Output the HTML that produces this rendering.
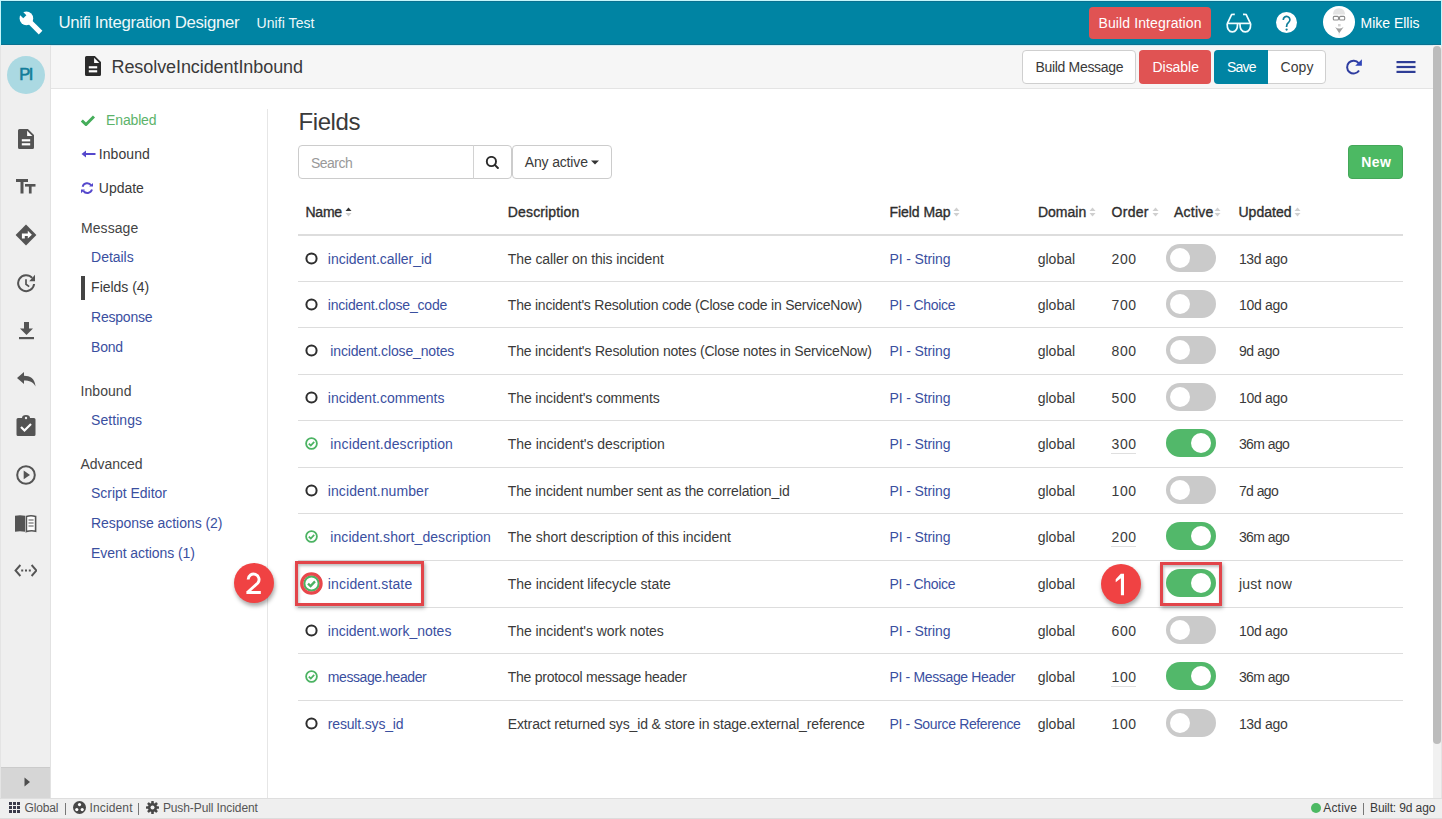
<!DOCTYPE html>
<html><head><meta charset="utf-8"><title>Unifi Integration Designer</title>
<style>
html,body{margin:0;padding:0;width:1442px;height:819px;overflow:hidden;background:#fff;}
body{position:relative;font-family:'Liberation Sans', sans-serif;}
svg{display:block;}
</style></head><body>
<div style="position:absolute;left:0px;top:0px;width:1442px;height:819px;background:#e4e4e4"></div>
<div style="position:absolute;left:0px;top:0px;width:1442px;height:46px;background:#c4f6fb"></div>
<div style="position:absolute;left:1px;top:1px;width:1440px;height:44px;background:#0084a3"></div>
<div style="position:absolute;left:1px;top:44px;width:1440px;height:1px;background:#0a7190"></div>
<div style="position:absolute;left:1px;top:1px;width:1440px;height:1px;background:#0a7190"></div>
<div style="position:absolute;left:51px;top:45px;width:1382px;height:43px;background:#f6f6f6;border-bottom:1px solid #e4e4e4"></div>
<div style="position:absolute;left:1px;top:45px;width:1440px;height:1px;background:#d3eef4"></div>
<div style="position:absolute;left:51px;top:89px;width:1382px;height:709px;background:#fff"></div>
<div style="position:absolute;left:1px;top:45px;width:49px;height:722px;background:#efefef"></div>
<div style="position:absolute;left:50px;top:45px;width:1px;height:753px;background:#e2e2e2"></div>
<div style="position:absolute;left:1px;top:767px;width:49px;height:31px;background:#d6d6d6;border-top:1px solid #cbcbcb;box-sizing:border-box"></div>
<div style="position:absolute;left:1433px;top:45px;width:8px;height:753px;background:#f1f1f1"></div>
<div style="position:absolute;left:1433px;top:46px;width:8px;height:698px;background:#bcbcbc;border-radius:4px"></div>
<div style="position:absolute;left:0px;top:798px;width:1442px;height:21px;background:#efefef;border-top:1px solid #dedede"></div>
<div style="position:absolute;left:0px;top:818px;width:1442px;height:1px;background:#dcdcdc"></div>
<svg style="position:absolute;left:19px;top:11px;" width="25" height="25" viewBox="0 0 25 25"><defs><mask id="wm"><rect x="-5" y="-5" width="35" height="35" fill="#fff"/><path d="M-0.44 -3.56 L7.36 4.24 L4.24 7.36 L-3.56 -0.44 Z" fill="#000"/></mask></defs><g mask="url(#wm)" fill="#fff"><circle cx="7.4" cy="7.4" r="6.8"/><path d="M6.2 9.8 L9.8 6.2 L23.4 19.8 L19.8 23.4 Z"/></g></svg>
<div style="position:absolute;left:58.50px;top:15.00px;font-size:16.8px;line-height:16.8px;font-weight:400;color:#eef8fa;letter-spacing:-0.334px;white-space:pre;">Unifi Integration Designer</div>
<div style="position:absolute;left:256.50px;top:16.00px;font-size:14px;line-height:14px;font-weight:400;color:#eef8fa;letter-spacing:0.075px;white-space:pre;">Unifi Test</div>
<div style="position:absolute;left:1089px;top:7px;width:122px;height:32px;background:#e05353;border-radius:4px"></div>
<div style="position:absolute;left:1098.50px;top:16.00px;font-size:14px;line-height:14px;font-weight:400;color:#fff;letter-spacing:0.113px;white-space:pre;">Build Integration</div>
<svg style="position:absolute;left:1225px;top:13px;" width="27" height="21" viewBox="0 0 27 21"><g fill="none" stroke="#f2fdff" stroke-width="1.7" stroke-linejoin="round"><path d="M2 10.4 H25.8"/><path d="M2.1 10.4 C2.1 15.9 4.3 18.8 7.3 18.8 C10.3 18.8 12.6 15.9 12.6 10.4"/><path d="M14.9 10.4 C14.9 15.9 17.2 18.8 20.3 18.8 C23.4 18.8 25.7 15.9 25.7 10.4"/><path d="M2.3 10.6 L6.6 1.6 Q7.3 1.2 9.8 1.3"/><path d="M25.5 10.6 L21.2 1.6 Q20.5 1.2 18 1.3"/></g></svg>
<svg style="position:absolute;left:1276px;top:12px;" width="21" height="21" viewBox="0 0 21 21"><circle cx="10.5" cy="10.5" r="10.5" fill="#fff"/><path d="M7.3 8 A3.3 3.3 0 1 1 12.6 10.4 Q10.6 11.9 10.6 14.2 V15" fill="none" stroke="#0f7e9a" stroke-width="1.7"/><circle cx="10.6" cy="17.6" r="1.15" fill="#0f7e9a"/></svg>
<svg style="position:absolute;left:1323px;top:6px;" width="32" height="32" viewBox="0 0 32 32"><circle cx="16" cy="16" r="16" fill="#fff"/><path d="M9.9 8.6 Q10.4 2.2 16 2.2 Q21.6 2.2 22.1 8.6 Z" fill="#e3e3e3"/><g fill="none" stroke="#8c8c8c" stroke-width="1.1"><rect x="10.3" y="10.4" width="5.2" height="3.6" rx="1"/><rect x="16.5" y="10.4" width="5.2" height="3.6" rx="1"/></g><rect x="15" y="18" width="2.6" height="2.4" fill="#d2d2d2"/><path d="M12.2 21 Q16 24.2 20.6 21 L16.2 27.2 Z" fill="#a0a0a0"/><path d="M15.2 27 L16.1 31 L17 27 Z" fill="#ececec"/></svg>
<div style="position:absolute;left:1360.50px;top:16.00px;font-size:14px;line-height:14px;font-weight:400;color:#fff;letter-spacing:-0.014px;white-space:pre;">Mike Ellis</div>
<svg style="position:absolute;left:85px;top:56px;" width="16" height="20" viewBox="0 0 16 20"><path d="M1.5 0 H9.9 L16 6.1 V18.5 A1.5 1.5 0 0 1 14.5 20 H1.5 A1.5 1.5 0 0 1 0 18.5 V1.5 A1.5 1.5 0 0 1 1.5 0 Z" fill="#2b2b2b"/><path d="M9.1 1.7 V6.9 H14.3 Z" fill="#fff"/><rect x="3.8" y="10.2" width="8.4" height="2.2" fill="#fff"/><rect x="3.8" y="14.2" width="8.4" height="2.2" fill="#fff"/></svg>
<div style="position:absolute;left:111.50px;top:58.00px;font-size:18px;line-height:18px;font-weight:400;color:#3a3a3a;letter-spacing:-0.078px;white-space:pre;">ResolveIncidentInbound</div>
<div style="position:absolute;left:1022px;top:50px;width:114px;height:34px;background:#fff;border:1px solid #cfcfcf;border-radius:4px;box-sizing:border-box"></div>
<div style="position:absolute;left:1035.50px;top:60.00px;font-size:14px;line-height:14px;font-weight:400;color:#3a3a3a;letter-spacing:-0.319px;white-space:pre;">Build Message</div>
<div style="position:absolute;left:1139px;top:50px;width:72px;height:34px;background:#e05353;border-radius:4px"></div>
<div style="position:absolute;left:1152.50px;top:60.00px;font-size:14px;line-height:14px;font-weight:400;color:#fff;letter-spacing:-0.034px;white-space:pre;">Disable</div>
<div style="position:absolute;left:1214px;top:50px;width:112px;height:34px;background:#fff;border:1px solid #cfcfcf;border-radius:4px;box-sizing:border-box"></div>
<div style="position:absolute;left:1214px;top:50px;width:54px;height:34px;background:#0084a3;border-radius:4px 0 0 4px"></div>
<div style="position:absolute;left:1227.00px;top:60.00px;font-size:14px;line-height:14px;font-weight:400;color:#fff;letter-spacing:-0.774px;white-space:pre;">Save</div>
<div style="position:absolute;left:1280.50px;top:60.00px;font-size:14px;line-height:14px;font-weight:400;color:#3a3a3a;letter-spacing:0.104px;white-space:pre;">Copy</div>
<svg style="position:absolute;left:1344px;top:58px;" width="19" height="18" viewBox="0 0 19 18"><path d="M14.6 5.2 A6.4 6.4 0 1 0 15 12.4" fill="none" stroke="#2f3da0" stroke-width="2"/><path d="M17.9 1.2 V7.7 H11.2 Z" fill="#3045b8"/></svg>
<svg style="position:absolute;left:1396px;top:60px;" width="20" height="14" viewBox="0 0 20 14"><g fill="#2e3d96"><rect x="0.5" y="1" width="19" height="2.2"/><rect x="0.5" y="5.9" width="19" height="2.2"/><rect x="0.5" y="10.8" width="19" height="2.2"/></g></svg>
<svg style="position:absolute;left:7px;top:56px;" width="38" height="38" viewBox="0 0 38 38"><circle cx="19" cy="19" r="19" fill="#abd9e2"/></svg>
<div style="position:absolute;left:19.30px;top:66.00px;font-size:16.5px;line-height:16.5px;font-weight:400;color:#137d9a;letter-spacing:-1.500px;white-space:pre;-webkit-text-stroke:0.6px #137d9a">PI</div>
<svg style="position:absolute;left:18px;top:129px;" width="16" height="20" viewBox="0 0 16 20"><path d="M1.5 0 H9.9 L16 6.1 V18.5 A1.5 1.5 0 0 1 14.5 20 H1.5 A1.5 1.5 0 0 1 0 18.5 V1.5 A1.5 1.5 0 0 1 1.5 0 Z" fill="#545454"/><path d="M9.1 1.7 V6.9 H14.3 Z" fill="#fff"/><rect x="3.8" y="10.2" width="8.4" height="2.2" fill="#fff"/><rect x="3.8" y="14.2" width="8.4" height="2.2" fill="#fff"/></svg>
<svg style="position:absolute;left:16px;top:179px;" width="20" height="15" viewBox="0 0 20 15"><g fill="#545454"><rect x="0" y="0" width="12" height="3"/><rect x="4.5" y="0" width="3" height="14.5"/><rect x="9" y="5" width="10.5" height="2.6"/><rect x="12.9" y="5" width="2.7" height="9.5"/></g></svg>
<svg style="position:absolute;left:15px;top:224px;" width="22" height="22" viewBox="0 0 22 22"><path d="M11 0.6 L21.4 11 L11 21.4 L0.6 11 Z" fill="#545454"/><path d="M6.9 14.4 V9.4 H12.8 V6.8 L16.9 10.7 L12.8 14.6 V12.1 H9.8 V14.4 Z" fill="#fff"/></svg>
<svg style="position:absolute;left:16px;top:274px;" width="21" height="20" viewBox="0 0 21 20"><g fill="none" stroke="#545454" stroke-width="2"><path d="M16.2 3.9 A8 8 0 1 0 18.1 10"/></g><path d="M10 5.2 V10.2 L13.2 12.6" fill="none" stroke="#545454" stroke-width="1.7"/><path d="M19 0.8 V7.2 H13.2 Z" fill="#545454"/></svg>
<svg style="position:absolute;left:19px;top:322px;" width="15" height="18" viewBox="0 0 15 18"><g fill="#545454"><rect x="5" y="0" width="5" height="7"/><path d="M1 6.5 H14 L7.5 13 Z"/><rect x="0" y="15" width="15" height="2.2"/></g></svg>
<svg style="position:absolute;left:17px;top:372px;" width="19" height="15" viewBox="0 0 19 15"><path d="M0 6 L7 0 V3.8 C13 3.8 18 6.5 18.5 14.5 C16 10 12.5 8.6 7 8.6 V12 Z" fill="#545454"/></svg>
<svg style="position:absolute;left:16px;top:415px;" width="20" height="21" viewBox="0 0 20 21"><path d="M2 3 H6 A4 3 0 0 1 14 3 H18 A1.5 1.5 0 0 1 19.5 4.5 V19.5 A1.5 1.5 0 0 1 18 21 H2 A1.5 1.5 0 0 1 0.5 19.5 V4.5 A1.5 1.5 0 0 1 2 3 Z" fill="#545454"/><circle cx="10" cy="3" r="1.2" fill="#efefef"/><path d="M5 12 L8.5 15.5 L15 9" fill="none" stroke="#fff" stroke-width="2.2"/></svg>
<svg style="position:absolute;left:15px;top:464px;" width="22" height="22" viewBox="0 0 22 22"><circle cx="11" cy="11" r="8.8" fill="none" stroke="#545454" stroke-width="2"/><path d="M8.7 6.6 L15 11 L8.7 15.2 Z" fill="#545454"/></svg>
<svg style="position:absolute;left:14px;top:514px;" width="23" height="19" viewBox="0 0 23 19"><path d="M1 1.8 Q6 0.6 11 1.8 V17.8 Q6 16.8 1 17.8 Z" fill="#545454"/><path d="M12.4 2.4 Q17 1.2 21.6 2.4 V17.2 Q17 16.2 12.4 17.6 Z" fill="#fff" stroke="#545454" stroke-width="1.6"/><g stroke="#545454" stroke-width="1.2"><path d="M14.5 6 H19.6 M14.5 9 H19.6 M14.5 12 H19.6"/></g></svg>
<svg style="position:absolute;left:14px;top:564px;" width="23" height="13" viewBox="0 0 23 13"><g fill="none" stroke="#545454" stroke-width="1.9"><path d="M6.4 1 L1.5 6.5 L6.4 12"/><path d="M17.6 1 L22.5 6.5 L17.6 12"/></g><g fill="#545454"><rect x="7.2" y="5.5" width="2" height="2"/><rect x="11" y="5.5" width="2" height="2"/><rect x="14.8" y="5.5" width="2" height="2"/></g></svg>
<svg style="position:absolute;left:24px;top:777px;" width="7" height="10" viewBox="0 0 7 10"><path d="M0.5 0.5 L6 5 L0.5 9.5 Z" fill="#4d4d4d"/></svg>
<svg style="position:absolute;left:81px;top:115px;" width="14" height="11" viewBox="0 0 14 11"><path d="M0.8 5.5 L5 9.5 L13 1.5" fill="none" stroke="#45ad5a" stroke-width="3"/></svg>
<div style="position:absolute;left:106.10px;top:113.00px;font-size:14px;line-height:14px;font-weight:400;color:#5cb36a;letter-spacing:-0.165px;white-space:pre;">Enabled</div>
<svg style="position:absolute;left:81px;top:150px;" width="15" height="8" viewBox="0 0 15 8"><path d="M14.5 4 H3" stroke="#5548cc" stroke-width="2"/><path d="M0.5 4 L5 0.5 V7.5 Z" fill="#5548cc"/></svg>
<div style="position:absolute;left:98.80px;top:147.00px;font-size:14px;line-height:14px;font-weight:400;color:#3a3a3a;letter-spacing:0.065px;white-space:pre;">Inbound</div>
<svg style="position:absolute;left:81px;top:182px;" width="13" height="13" viewBox="0 0 13 13"><g fill="none" stroke="#5548cc" stroke-width="1.9"><path d="M1.6 4.7 A4.8 4.8 0 0 1 10.2 3.4"/><path d="M11 7.6 A4.8 4.8 0 0 1 2.4 8.9"/></g><path d="M12 0.9 V4.6 H8.2 Z" fill="#5548cc"/><path d="M0 7.4 H3.9 L0 11.3 Z" fill="#5548cc"/></svg>
<div style="position:absolute;left:98.80px;top:181.00px;font-size:14px;line-height:14px;font-weight:400;color:#3a3a3a;letter-spacing:-0.031px;white-space:pre;">Update</div>
<div style="position:absolute;left:80.90px;top:221.00px;font-size:14px;line-height:14px;font-weight:400;color:#444;letter-spacing:0.098px;white-space:pre;">Message</div>
<div style="position:absolute;left:91.10px;top:250.00px;font-size:14px;line-height:14px;font-weight:400;color:#3a4f9f;letter-spacing:-0.033px;white-space:pre;">Details</div>
<div style="position:absolute;left:81px;top:276px;width:4px;height:24px;background:#444"></div>
<div style="position:absolute;left:91.10px;top:280.00px;font-size:14px;line-height:14px;font-weight:400;color:#3a3a3a;letter-spacing:-0.018px;white-space:pre;">Fields (4)</div>
<div style="position:absolute;left:91.10px;top:310.00px;font-size:14px;line-height:14px;font-weight:400;color:#3a4f9f;letter-spacing:-0.235px;white-space:pre;">Response</div>
<div style="position:absolute;left:91.10px;top:340.00px;font-size:14px;line-height:14px;font-weight:400;color:#3a4f9f;letter-spacing:-0.234px;white-space:pre;">Bond</div>
<div style="position:absolute;left:80.50px;top:384.00px;font-size:14px;line-height:14px;font-weight:400;color:#444;letter-spacing:0.065px;white-space:pre;">Inbound</div>
<div style="position:absolute;left:91.00px;top:413.00px;font-size:14px;line-height:14px;font-weight:400;color:#3a4f9f;letter-spacing:0.058px;white-space:pre;">Settings</div>
<div style="position:absolute;left:80.50px;top:457.00px;font-size:14px;line-height:14px;font-weight:400;color:#444;letter-spacing:-0.040px;white-space:pre;">Advanced</div>
<div style="position:absolute;left:91.00px;top:486.00px;font-size:14px;line-height:14px;font-weight:400;color:#3a4f9f;letter-spacing:-0.021px;white-space:pre;">Script Editor</div>
<div style="position:absolute;left:91.00px;top:516.00px;font-size:14px;line-height:14px;font-weight:400;color:#3a4f9f;letter-spacing:-0.042px;white-space:pre;">Response actions (2)</div>
<div style="position:absolute;left:91.00px;top:546.00px;font-size:14px;line-height:14px;font-weight:400;color:#3a4f9f;letter-spacing:-0.066px;white-space:pre;">Event actions (1)</div>
<div style="position:absolute;left:267px;top:109px;width:1px;height:689px;background:#e6e6e6"></div>
<div style="position:absolute;left:298.50px;top:110.00px;font-size:24px;line-height:24px;font-weight:400;color:#3a3a3a;letter-spacing:-0.406px;white-space:pre;">Fields</div>
<div style="position:absolute;left:298px;top:145px;width:214px;height:34px;border:1px solid #cccccc;border-radius:4px;box-sizing:border-box;background:#fff"></div>
<div style="position:absolute;left:473px;top:145px;width:1px;height:34px;background:#d2d2d2"></div>
<div style="position:absolute;left:310.90px;top:156.00px;font-size:14px;line-height:14px;font-weight:400;color:#999;letter-spacing:-0.512px;white-space:pre;">Search</div>
<svg style="position:absolute;left:485px;top:156px;" width="14" height="14" viewBox="0 0 14 14"><circle cx="6.4" cy="5.5" r="4.6" fill="none" stroke="#2a2a2a" stroke-width="1.9"/><path d="M9.8 8.9 L12.9 12" stroke="#2a2a2a" stroke-width="2" stroke-linecap="round"/></svg>
<div style="position:absolute;left:512px;top:145px;width:100px;height:34px;border:1px solid #cccccc;border-radius:4px;box-sizing:border-box;background:#fff"></div>
<div style="position:absolute;left:524.70px;top:155.00px;font-size:14px;line-height:14px;font-weight:400;color:#3a3a3a;letter-spacing:-0.144px;white-space:pre;">Any active</div>
<svg style="position:absolute;left:591px;top:160px;" width="8" height="5" viewBox="0 0 8 5"><path d="M0 0.5 H8 L4 4.5 Z" fill="#333"/></svg>
<div style="position:absolute;left:1348px;top:145px;width:55px;height:34px;background:#4cb963;border:1px solid #44a759;border-radius:4px;box-sizing:border-box"></div>
<div style="position:absolute;left:1361.20px;top:155.00px;font-size:14px;line-height:14px;font-weight:700;color:#fff;letter-spacing:0.402px;white-space:pre;">New</div>
<div style="position:absolute;left:305.50px;top:205.00px;font-size:14px;line-height:14px;font-weight:400;color:#2e2e2e;letter-spacing:-0.253px;white-space:pre;-webkit-text-stroke:0.35px #2e2e2e">Name</div>
<svg style="position:absolute;left:344.5px;top:206px;" width="7" height="12" viewBox="0 0 7 12"><path d="M0.5 5 L3.5 1.5 L6.5 5 Z" fill="#333"/><path d="M0.5 7 L3.5 10.5 L6.5 7 Z" fill="#cfcfcf"/></svg>
<div style="position:absolute;left:507.80px;top:205.00px;font-size:14px;line-height:14px;font-weight:400;color:#2e2e2e;letter-spacing:0.147px;white-space:pre;-webkit-text-stroke:0.35px #2e2e2e">Description</div>
<div style="position:absolute;left:889.50px;top:205.00px;font-size:14px;line-height:14px;font-weight:400;color:#2e2e2e;letter-spacing:-0.059px;white-space:pre;-webkit-text-stroke:0.35px #2e2e2e">Field Map</div>
<svg style="position:absolute;left:952.5px;top:206px;" width="7" height="12" viewBox="0 0 7 12"><path d="M0.5 5 L3.5 1.5 L6.5 5 Z" fill="#cfcfcf"/><path d="M0.5 7 L3.5 10.5 L6.5 7 Z" fill="#cfcfcf"/></svg>
<div style="position:absolute;left:1037.90px;top:205.00px;font-size:14px;line-height:14px;font-weight:400;color:#2e2e2e;letter-spacing:0.030px;white-space:pre;-webkit-text-stroke:0.35px #2e2e2e">Domain</div>
<svg style="position:absolute;left:1088.5px;top:206px;" width="7" height="12" viewBox="0 0 7 12"><path d="M0.5 5 L3.5 1.5 L6.5 5 Z" fill="#cfcfcf"/><path d="M0.5 7 L3.5 10.5 L6.5 7 Z" fill="#cfcfcf"/></svg>
<div style="position:absolute;left:1111.50px;top:205.00px;font-size:14px;line-height:14px;font-weight:400;color:#2e2e2e;letter-spacing:0.301px;white-space:pre;-webkit-text-stroke:0.35px #2e2e2e">Order</div>
<svg style="position:absolute;left:1151.5px;top:206px;" width="7" height="12" viewBox="0 0 7 12"><path d="M0.5 5 L3.5 1.5 L6.5 5 Z" fill="#cfcfcf"/><path d="M0.5 7 L3.5 10.5 L6.5 7 Z" fill="#cfcfcf"/></svg>
<div style="position:absolute;left:1174.00px;top:205.00px;font-size:14px;line-height:14px;font-weight:400;color:#2e2e2e;letter-spacing:0.235px;white-space:pre;-webkit-text-stroke:0.35px #2e2e2e">Active</div>
<svg style="position:absolute;left:1214px;top:206px;" width="7" height="12" viewBox="0 0 7 12"><path d="M0.5 5 L3.5 1.5 L6.5 5 Z" fill="#cfcfcf"/><path d="M0.5 7 L3.5 10.5 L6.5 7 Z" fill="#cfcfcf"/></svg>
<div style="position:absolute;left:1238.50px;top:205.00px;font-size:14px;line-height:14px;font-weight:400;color:#2e2e2e;letter-spacing:0.010px;white-space:pre;-webkit-text-stroke:0.35px #2e2e2e">Updated</div>
<svg style="position:absolute;left:1294px;top:206px;" width="7" height="12" viewBox="0 0 7 12"><path d="M0.5 5 L3.5 1.5 L6.5 5 Z" fill="#cfcfcf"/><path d="M0.5 7 L3.5 10.5 L6.5 7 Z" fill="#cfcfcf"/></svg>
<div style="position:absolute;left:298px;top:234px;width:1105px;height:2px;background:#dddddd"></div>
<svg style="position:absolute;left:305px;top:252.0px;" width="13" height="13" viewBox="0 0 13 13"><circle cx="6.5" cy="6.5" r="5.1" fill="none" stroke="#2e2e2e" stroke-width="2"/></svg>
<div style="position:absolute;left:327.80px;top:252.00px;font-size:14px;line-height:14px;font-weight:400;color:#3a4f9f;letter-spacing:-0.017px;white-space:pre;">incident.caller_id</div>
<div style="position:absolute;left:507.80px;top:252.00px;font-size:14px;line-height:14px;font-weight:400;color:#3a3a3a;letter-spacing:-0.106px;white-space:pre;">The caller on this incident</div>
<div style="position:absolute;left:889.50px;top:252.00px;font-size:14px;line-height:14px;font-weight:400;color:#3a4f9f;letter-spacing:-0.125px;white-space:pre;">PI - String</div>
<div style="position:absolute;left:1037.70px;top:252.00px;font-size:14px;line-height:14px;font-weight:400;color:#3a3a3a;letter-spacing:0.005px;white-space:pre;">global</div>
<div style="position:absolute;left:1111.50px;top:252.00px;font-size:14px;line-height:14px;font-weight:400;color:#3a3a3a;letter-spacing:0.620px;white-space:pre;">200</div>
<div style="position:absolute;left:1166px;top:244px;width:50px;height:28px;background:#cacaca;border-radius:14px"></div>
<div style="position:absolute;left:1170px;top:248px;width:20px;height:20px;background:#fff;border-radius:50%"></div>
<div style="position:absolute;left:1238.90px;top:252.00px;font-size:14px;line-height:14px;font-weight:400;color:#3a3a3a;letter-spacing:-0.302px;white-space:pre;">13d ago</div>
<div style="position:absolute;left:298px;top:281px;width:1105px;height:1px;background:#dddddd"></div>
<svg style="position:absolute;left:305px;top:298.0px;" width="13" height="13" viewBox="0 0 13 13"><circle cx="6.5" cy="6.5" r="5.1" fill="none" stroke="#2e2e2e" stroke-width="2"/></svg>
<div style="position:absolute;left:327.80px;top:298.00px;font-size:14px;line-height:14px;font-weight:400;color:#3a4f9f;letter-spacing:-0.194px;white-space:pre;">incident.close_code</div>
<div style="position:absolute;left:507.80px;top:298.00px;font-size:14px;line-height:14px;font-weight:400;color:#3a3a3a;letter-spacing:-0.221px;white-space:pre;">The incident&#x27;s Resolution code (Close code in ServiceNow)</div>
<div style="position:absolute;left:889.50px;top:298.00px;font-size:14px;line-height:14px;font-weight:400;color:#3a4f9f;letter-spacing:-0.325px;white-space:pre;">PI - Choice</div>
<div style="position:absolute;left:1037.70px;top:298.00px;font-size:14px;line-height:14px;font-weight:400;color:#3a3a3a;letter-spacing:0.005px;white-space:pre;">global</div>
<div style="position:absolute;left:1111.50px;top:298.00px;font-size:14px;line-height:14px;font-weight:400;color:#3a3a3a;letter-spacing:0.620px;white-space:pre;">700</div>
<div style="position:absolute;left:1166px;top:290px;width:50px;height:28px;background:#cacaca;border-radius:14px"></div>
<div style="position:absolute;left:1170px;top:294px;width:20px;height:20px;background:#fff;border-radius:50%"></div>
<div style="position:absolute;left:1238.90px;top:298.00px;font-size:14px;line-height:14px;font-weight:400;color:#3a3a3a;letter-spacing:-0.268px;white-space:pre;">10d ago</div>
<div style="position:absolute;left:298px;top:327px;width:1105px;height:1px;background:#dddddd"></div>
<svg style="position:absolute;left:305px;top:344.0px;" width="13" height="13" viewBox="0 0 13 13"><circle cx="6.5" cy="6.5" r="5.1" fill="none" stroke="#2e2e2e" stroke-width="2"/></svg>
<div style="position:absolute;left:330.30px;top:344.00px;font-size:14px;line-height:14px;font-weight:400;color:#3a4f9f;letter-spacing:-0.151px;white-space:pre;">incident.close_notes</div>
<div style="position:absolute;left:507.80px;top:344.00px;font-size:14px;line-height:14px;font-weight:400;color:#3a3a3a;letter-spacing:-0.183px;white-space:pre;">The incident&#x27;s Resolution notes (Close notes in ServiceNow)</div>
<div style="position:absolute;left:889.50px;top:344.00px;font-size:14px;line-height:14px;font-weight:400;color:#3a4f9f;letter-spacing:-0.125px;white-space:pre;">PI - String</div>
<div style="position:absolute;left:1037.70px;top:344.00px;font-size:14px;line-height:14px;font-weight:400;color:#3a3a3a;letter-spacing:0.005px;white-space:pre;">global</div>
<div style="position:absolute;left:1111.50px;top:344.00px;font-size:14px;line-height:14px;font-weight:400;color:#3a3a3a;letter-spacing:0.620px;white-space:pre;">800</div>
<div style="position:absolute;left:1166px;top:336px;width:50px;height:28px;background:#cacaca;border-radius:14px"></div>
<div style="position:absolute;left:1170px;top:340px;width:20px;height:20px;background:#fff;border-radius:50%"></div>
<div style="position:absolute;left:1238.90px;top:344.00px;font-size:14px;line-height:14px;font-weight:400;color:#3a3a3a;letter-spacing:-0.366px;white-space:pre;">9d ago</div>
<div style="position:absolute;left:298px;top:374px;width:1105px;height:1px;background:#dddddd"></div>
<svg style="position:absolute;left:305px;top:391.0px;" width="13" height="13" viewBox="0 0 13 13"><circle cx="6.5" cy="6.5" r="5.1" fill="none" stroke="#2e2e2e" stroke-width="2"/></svg>
<div style="position:absolute;left:327.80px;top:391.00px;font-size:14px;line-height:14px;font-weight:400;color:#3a4f9f;letter-spacing:-0.001px;white-space:pre;">incident.comments</div>
<div style="position:absolute;left:507.80px;top:391.00px;font-size:14px;line-height:14px;font-weight:400;color:#3a3a3a;letter-spacing:-0.109px;white-space:pre;">The incident&#x27;s comments</div>
<div style="position:absolute;left:889.50px;top:391.00px;font-size:14px;line-height:14px;font-weight:400;color:#3a4f9f;letter-spacing:-0.125px;white-space:pre;">PI - String</div>
<div style="position:absolute;left:1037.70px;top:391.00px;font-size:14px;line-height:14px;font-weight:400;color:#3a3a3a;letter-spacing:0.005px;white-space:pre;">global</div>
<div style="position:absolute;left:1111.50px;top:391.00px;font-size:14px;line-height:14px;font-weight:400;color:#3a3a3a;letter-spacing:0.620px;white-space:pre;">500</div>
<div style="position:absolute;left:1166px;top:383px;width:50px;height:28px;background:#cacaca;border-radius:14px"></div>
<div style="position:absolute;left:1170px;top:387px;width:20px;height:20px;background:#fff;border-radius:50%"></div>
<div style="position:absolute;left:1238.90px;top:391.00px;font-size:14px;line-height:14px;font-weight:400;color:#3a3a3a;letter-spacing:-0.268px;white-space:pre;">10d ago</div>
<div style="position:absolute;left:298px;top:420px;width:1105px;height:1px;background:#dddddd"></div>
<svg style="position:absolute;left:305px;top:437.0px;" width="13" height="13" viewBox="0 0 13 13"><circle cx="6.5" cy="6.5" r="5.4" fill="none" stroke="#4cb363" stroke-width="1.8"/><path d="M3.8 6.6 L5.8 8.5 L9.2 4.9" fill="none" stroke="#4cb363" stroke-width="1.8"/></svg>
<div style="position:absolute;left:330.30px;top:437.00px;font-size:14px;line-height:14px;font-weight:400;color:#3a4f9f;letter-spacing:0.144px;white-space:pre;">incident.description</div>
<div style="position:absolute;left:507.80px;top:437.00px;font-size:14px;line-height:14px;font-weight:400;color:#3a3a3a;letter-spacing:-0.022px;white-space:pre;">The incident&#x27;s description</div>
<div style="position:absolute;left:889.50px;top:437.00px;font-size:14px;line-height:14px;font-weight:400;color:#3a4f9f;letter-spacing:-0.125px;white-space:pre;">PI - String</div>
<div style="position:absolute;left:1037.70px;top:437.00px;font-size:14px;line-height:14px;font-weight:400;color:#3a3a3a;letter-spacing:0.005px;white-space:pre;">global</div>
<div style="position:absolute;left:1111.50px;top:437.00px;font-size:14px;line-height:14px;font-weight:400;color:#3a3a3a;letter-spacing:0.620px;white-space:pre;">300</div>
<div style="position:absolute;left:1111px;top:453px;width:25px;height:1px;background:#dfdfdf"></div>
<div style="position:absolute;left:1166px;top:429px;width:50px;height:28px;background:#52b86a;border-radius:14px"></div>
<div style="position:absolute;left:1191px;top:433px;width:20px;height:20px;background:#fff;border-radius:50%"></div>
<div style="position:absolute;left:1238.90px;top:437.00px;font-size:14px;line-height:14px;font-weight:400;color:#3a3a3a;letter-spacing:-0.581px;white-space:pre;">36m ago</div>
<div style="position:absolute;left:298px;top:467px;width:1105px;height:1px;background:#dddddd"></div>
<svg style="position:absolute;left:305px;top:484.0px;" width="13" height="13" viewBox="0 0 13 13"><circle cx="6.5" cy="6.5" r="5.1" fill="none" stroke="#2e2e2e" stroke-width="2"/></svg>
<div style="position:absolute;left:327.80px;top:484.00px;font-size:14px;line-height:14px;font-weight:400;color:#3a4f9f;letter-spacing:0.084px;white-space:pre;">incident.number</div>
<div style="position:absolute;left:507.80px;top:484.00px;font-size:14px;line-height:14px;font-weight:400;color:#3a3a3a;letter-spacing:-0.132px;white-space:pre;">The incident number sent as the correlation_id</div>
<div style="position:absolute;left:889.50px;top:484.00px;font-size:14px;line-height:14px;font-weight:400;color:#3a4f9f;letter-spacing:-0.125px;white-space:pre;">PI - String</div>
<div style="position:absolute;left:1037.70px;top:484.00px;font-size:14px;line-height:14px;font-weight:400;color:#3a3a3a;letter-spacing:0.005px;white-space:pre;">global</div>
<div style="position:absolute;left:1111.50px;top:484.00px;font-size:14px;line-height:14px;font-weight:400;color:#3a3a3a;letter-spacing:0.620px;white-space:pre;">100</div>
<div style="position:absolute;left:1166px;top:476px;width:50px;height:28px;background:#cacaca;border-radius:14px"></div>
<div style="position:absolute;left:1170px;top:480px;width:20px;height:20px;background:#fff;border-radius:50%"></div>
<div style="position:absolute;left:1238.90px;top:484.00px;font-size:14px;line-height:14px;font-weight:400;color:#3a3a3a;letter-spacing:-0.566px;white-space:pre;">7d ago</div>
<div style="position:absolute;left:298px;top:513px;width:1105px;height:1px;background:#dddddd"></div>
<svg style="position:absolute;left:305px;top:530.0px;" width="13" height="13" viewBox="0 0 13 13"><circle cx="6.5" cy="6.5" r="5.4" fill="none" stroke="#4cb363" stroke-width="1.8"/><path d="M3.8 6.6 L5.8 8.5 L9.2 4.9" fill="none" stroke="#4cb363" stroke-width="1.8"/></svg>
<div style="position:absolute;left:330.30px;top:530.00px;font-size:14px;line-height:14px;font-weight:400;color:#3a4f9f;letter-spacing:0.069px;white-space:pre;">incident.short_description</div>
<div style="position:absolute;left:507.80px;top:530.00px;font-size:14px;line-height:14px;font-weight:400;color:#3a3a3a;letter-spacing:-0.030px;white-space:pre;">The short description of this incident</div>
<div style="position:absolute;left:889.50px;top:530.00px;font-size:14px;line-height:14px;font-weight:400;color:#3a4f9f;letter-spacing:-0.125px;white-space:pre;">PI - String</div>
<div style="position:absolute;left:1037.70px;top:530.00px;font-size:14px;line-height:14px;font-weight:400;color:#3a3a3a;letter-spacing:0.005px;white-space:pre;">global</div>
<div style="position:absolute;left:1111.50px;top:530.00px;font-size:14px;line-height:14px;font-weight:400;color:#3a3a3a;letter-spacing:0.620px;white-space:pre;">200</div>
<div style="position:absolute;left:1111px;top:546px;width:25px;height:1px;background:#dfdfdf"></div>
<div style="position:absolute;left:1166px;top:522px;width:50px;height:28px;background:#52b86a;border-radius:14px"></div>
<div style="position:absolute;left:1191px;top:526px;width:20px;height:20px;background:#fff;border-radius:50%"></div>
<div style="position:absolute;left:1238.90px;top:530.00px;font-size:14px;line-height:14px;font-weight:400;color:#3a3a3a;letter-spacing:-0.581px;white-space:pre;">36m ago</div>
<div style="position:absolute;left:298px;top:560px;width:1105px;height:1px;background:#dddddd"></div>
<svg style="position:absolute;left:301px;top:573.0px;" width="21" height="21" viewBox="0 0 21 21"><circle cx="10.5" cy="10.5" r="7.2" fill="#fff" stroke="#4cb363" stroke-width="2.2"/><path d="M7 10.6 L9.6 13.1 L14 8.4" fill="none" stroke="#4cb363" stroke-width="2.3"/></svg>
<div style="position:absolute;left:327.80px;top:577.00px;font-size:14px;line-height:14px;font-weight:400;color:#3a4f9f;letter-spacing:0.146px;white-space:pre;">incident.state</div>
<div style="position:absolute;left:507.80px;top:577.00px;font-size:14px;line-height:14px;font-weight:400;color:#3a3a3a;letter-spacing:-0.045px;white-space:pre;">The incident lifecycle state</div>
<div style="position:absolute;left:889.50px;top:577.00px;font-size:14px;line-height:14px;font-weight:400;color:#3a4f9f;letter-spacing:-0.325px;white-space:pre;">PI - Choice</div>
<div style="position:absolute;left:1037.70px;top:577.00px;font-size:14px;line-height:14px;font-weight:400;color:#3a3a3a;letter-spacing:0.005px;white-space:pre;">global</div>
<div style="position:absolute;left:1166px;top:569px;width:50px;height:28px;background:#52b86a;border-radius:14px"></div>
<div style="position:absolute;left:1191px;top:573px;width:20px;height:20px;background:#fff;border-radius:50%"></div>
<div style="position:absolute;left:1238.90px;top:577.00px;font-size:14px;line-height:14px;font-weight:400;color:#3a3a3a;letter-spacing:0.234px;white-space:pre;">just now</div>
<div style="position:absolute;left:298px;top:607px;width:1105px;height:1px;background:#dddddd"></div>
<svg style="position:absolute;left:305px;top:624.0px;" width="13" height="13" viewBox="0 0 13 13"><circle cx="6.5" cy="6.5" r="5.1" fill="none" stroke="#2e2e2e" stroke-width="2"/></svg>
<div style="position:absolute;left:327.80px;top:624.00px;font-size:14px;line-height:14px;font-weight:400;color:#3a4f9f;letter-spacing:-0.008px;white-space:pre;">incident.work_notes</div>
<div style="position:absolute;left:507.80px;top:624.00px;font-size:14px;line-height:14px;font-weight:400;color:#3a3a3a;letter-spacing:-0.064px;white-space:pre;">The incident&#x27;s work notes</div>
<div style="position:absolute;left:889.50px;top:624.00px;font-size:14px;line-height:14px;font-weight:400;color:#3a4f9f;letter-spacing:-0.125px;white-space:pre;">PI - String</div>
<div style="position:absolute;left:1037.70px;top:624.00px;font-size:14px;line-height:14px;font-weight:400;color:#3a3a3a;letter-spacing:0.005px;white-space:pre;">global</div>
<div style="position:absolute;left:1111.50px;top:624.00px;font-size:14px;line-height:14px;font-weight:400;color:#3a3a3a;letter-spacing:0.620px;white-space:pre;">600</div>
<div style="position:absolute;left:1166px;top:616px;width:50px;height:28px;background:#cacaca;border-radius:14px"></div>
<div style="position:absolute;left:1170px;top:620px;width:20px;height:20px;background:#fff;border-radius:50%"></div>
<div style="position:absolute;left:1238.90px;top:624.00px;font-size:14px;line-height:14px;font-weight:400;color:#3a3a3a;letter-spacing:-0.268px;white-space:pre;">10d ago</div>
<div style="position:absolute;left:298px;top:653px;width:1105px;height:1px;background:#dddddd"></div>
<svg style="position:absolute;left:305px;top:670.0px;" width="13" height="13" viewBox="0 0 13 13"><circle cx="6.5" cy="6.5" r="5.4" fill="none" stroke="#4cb363" stroke-width="1.8"/><path d="M3.8 6.6 L5.8 8.5 L9.2 4.9" fill="none" stroke="#4cb363" stroke-width="1.8"/></svg>
<div style="position:absolute;left:327.80px;top:670.00px;font-size:14px;line-height:14px;font-weight:400;color:#3a4f9f;letter-spacing:-0.415px;white-space:pre;">message.header</div>
<div style="position:absolute;left:507.80px;top:670.00px;font-size:14px;line-height:14px;font-weight:400;color:#3a3a3a;letter-spacing:-0.269px;white-space:pre;">The protocol message header</div>
<div style="position:absolute;left:889.50px;top:670.00px;font-size:14px;line-height:14px;font-weight:400;color:#3a4f9f;letter-spacing:-0.350px;white-space:pre;">PI - Message Header</div>
<div style="position:absolute;left:1037.70px;top:670.00px;font-size:14px;line-height:14px;font-weight:400;color:#3a3a3a;letter-spacing:0.005px;white-space:pre;">global</div>
<div style="position:absolute;left:1111.50px;top:670.00px;font-size:14px;line-height:14px;font-weight:400;color:#3a3a3a;letter-spacing:0.620px;white-space:pre;">100</div>
<div style="position:absolute;left:1111px;top:686px;width:25px;height:1px;background:#dfdfdf"></div>
<div style="position:absolute;left:1166px;top:662px;width:50px;height:28px;background:#52b86a;border-radius:14px"></div>
<div style="position:absolute;left:1191px;top:666px;width:20px;height:20px;background:#fff;border-radius:50%"></div>
<div style="position:absolute;left:1238.90px;top:670.00px;font-size:14px;line-height:14px;font-weight:400;color:#3a3a3a;letter-spacing:-0.581px;white-space:pre;">36m ago</div>
<div style="position:absolute;left:298px;top:700px;width:1105px;height:1px;background:#dddddd"></div>
<svg style="position:absolute;left:305px;top:717.0px;" width="13" height="13" viewBox="0 0 13 13"><circle cx="6.5" cy="6.5" r="5.1" fill="none" stroke="#2e2e2e" stroke-width="2"/></svg>
<div style="position:absolute;left:327.80px;top:717.00px;font-size:14px;line-height:14px;font-weight:400;color:#3a4f9f;letter-spacing:-0.168px;white-space:pre;">result.sys_id</div>
<div style="position:absolute;left:507.80px;top:717.00px;font-size:14px;line-height:14px;font-weight:400;color:#3a3a3a;letter-spacing:-0.137px;white-space:pre;">Extract returned sys_id &amp; store in stage.external_reference</div>
<div style="position:absolute;left:889.50px;top:717.00px;font-size:14px;line-height:14px;font-weight:400;color:#3a4f9f;letter-spacing:-0.356px;white-space:pre;">PI - Source Reference</div>
<div style="position:absolute;left:1037.70px;top:717.00px;font-size:14px;line-height:14px;font-weight:400;color:#3a3a3a;letter-spacing:0.005px;white-space:pre;">global</div>
<div style="position:absolute;left:1111.50px;top:717.00px;font-size:14px;line-height:14px;font-weight:400;color:#3a3a3a;letter-spacing:0.620px;white-space:pre;">100</div>
<div style="position:absolute;left:1166px;top:709px;width:50px;height:28px;background:#cacaca;border-radius:14px"></div>
<div style="position:absolute;left:1170px;top:713px;width:20px;height:20px;background:#fff;border-radius:50%"></div>
<div style="position:absolute;left:1238.90px;top:717.00px;font-size:14px;line-height:14px;font-weight:400;color:#3a3a3a;letter-spacing:-0.302px;white-space:pre;">13d ago</div>
<div style="position:absolute;left:295px;top:561px;width:129px;height:45px;border:3px solid #e2454a;box-sizing:border-box;box-shadow:1px 2px 4px rgba(0,0,0,0.35), inset 1px 2px 3px rgba(0,0,0,0.25)"></div>
<svg style="position:absolute;left:300px;top:572px;" width="23" height="23" viewBox="0 0 23 23"><circle cx="11.4" cy="11.5" r="9.7" fill="none" stroke="#e8474b" stroke-width="3.2"/></svg>
<div style="position:absolute;left:234px;top:563px;width:40px;height:40px;background:#f04243;border-radius:50%;box-shadow:1px 3px 4px rgba(0,0,0,0.35)"></div>
<svg style="position:absolute;left:244px;top:571px;" width="20" height="25" viewBox="0 0 20 25"><path d="M4.15 8.5 A5.45 5.45 0 1 1 13.8 12 L3.9 21" stroke="#fff" stroke-width="2.9" fill="none"/><rect x="2.4" y="20" width="14.4" height="3" fill="#fff"/></svg>
<div style="position:absolute;left:1160px;top:562px;width:62px;height:44px;border:3px solid #e2454a;box-sizing:border-box;box-shadow:1px 2px 4px rgba(0,0,0,0.35), inset 1px 2px 3px rgba(0,0,0,0.25)"></div>
<div style="position:absolute;left:1101px;top:564px;width:40px;height:40px;background:#f04243;border-radius:50%;box-shadow:1px 3px 4px rgba(0,0,0,0.35)"></div>
<svg style="position:absolute;left:1113px;top:573px;" width="12" height="23" viewBox="0 0 12 23"><path d="M7.8 0.8 H11 V22.2 H7.9 V5.2 L2.7 9.3 V6.3 Z" fill="#fff"/></svg>
<svg style="position:absolute;left:9px;top:802px;" width="11" height="11" viewBox="0 0 11 11"><g fill="#3a3a4a"><rect x="0" y="0" width="3" height="3"/><rect x="4" y="0" width="3" height="3"/><rect x="8" y="0" width="3" height="3"/><rect x="0" y="4" width="3" height="3"/><rect x="4" y="4" width="3" height="3"/><rect x="8" y="4" width="3" height="3"/><rect x="0" y="8" width="3" height="3"/><rect x="4" y="8" width="3" height="3"/><rect x="8" y="8" width="3" height="3"/></g></svg>
<div style="position:absolute;left:24.50px;top:802.00px;font-size:12px;line-height:12px;font-weight:400;color:#555;letter-spacing:-0.138px;white-space:pre;">Global</div>
<div style="position:absolute;left:65px;top:803px;width:1px;height:12px;background:#777"></div>
<svg style="position:absolute;left:73px;top:801px;" width="13" height="13" viewBox="0 0 13 13"><circle cx="6.5" cy="6.5" r="6.5" fill="#474747"/><g fill="#fff"><circle cx="6.5" cy="3.6" r="1.6"/><circle cx="3.8" cy="8.6" r="1.6"/><circle cx="9.2" cy="8.6" r="1.6"/></g></svg>
<div style="position:absolute;left:89.50px;top:802.00px;font-size:12px;line-height:12px;font-weight:400;color:#555;letter-spacing:0.138px;white-space:pre;">Incident</div>
<div style="position:absolute;left:138px;top:803px;width:1px;height:12px;background:#777"></div>
<svg style="position:absolute;left:146px;top:801px;" width="13" height="13" viewBox="0 0 13 13"><g fill="#474747"><circle cx="6.5" cy="6.5" r="4.6"/><rect x="5.2" y="0" width="2.6" height="13" rx="0.6" transform="rotate(0 6.5 6.5)"/><rect x="5.2" y="0" width="2.6" height="13" rx="0.6" transform="rotate(45 6.5 6.5)"/><rect x="5.2" y="0" width="2.6" height="13" rx="0.6" transform="rotate(90 6.5 6.5)"/><rect x="5.2" y="0" width="2.6" height="13" rx="0.6" transform="rotate(135 6.5 6.5)"/></g><circle cx="6.5" cy="6.5" r="2" fill="#efefef"/></svg>
<div style="position:absolute;left:162.90px;top:802.00px;font-size:12px;line-height:12px;font-weight:400;color:#555;letter-spacing:-0.102px;white-space:pre;">Push-Pull Incident</div>
<svg style="position:absolute;left:1311px;top:803px;" width="10" height="10" viewBox="0 0 10 10"><circle cx="5" cy="5" r="5" fill="#4cb963"/></svg>
<div style="position:absolute;left:1323.20px;top:802.00px;font-size:12px;line-height:12px;font-weight:400;color:#3a3a3a;letter-spacing:0.203px;white-space:pre;">Active</div>
<div style="position:absolute;left:1363px;top:803px;width:1px;height:12px;background:#777"></div>
<div style="position:absolute;left:1370.10px;top:802.00px;font-size:12px;line-height:12px;font-weight:400;color:#3a3a3a;letter-spacing:-0.118px;white-space:pre;">Built: 9d ago</div>
</body></html>
